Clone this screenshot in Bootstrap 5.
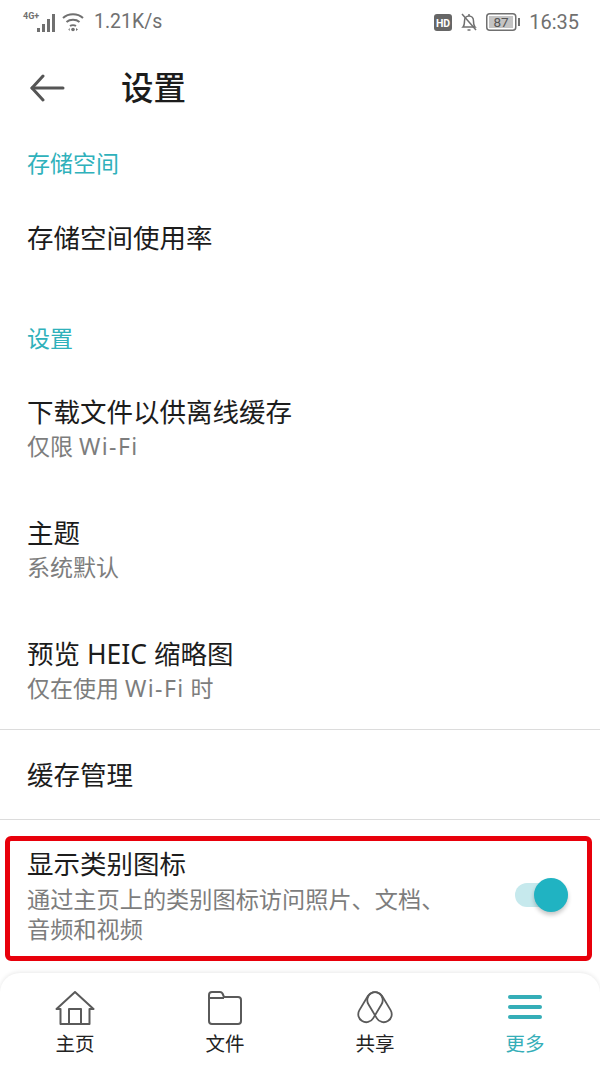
<!DOCTYPE html>
<html lang="zh">
<head>
    <meta charset="UTF-8">
    <meta name="viewport" content="width=device-width, initial-scale=1.0">
    <title>设置</title>
    <link href="https://cdn.jsdelivr.net/npm/bootstrap@5.3.0/dist/css/bootstrap.min.css" rel="stylesheet">

    <style>
        body {
            width: 600px;
            height: 1066px;
            overflow: hidden;
            font-family: "Noto Sans", "Noto Sans CJK SC", sans-serif;
            color: #1c1c1c;
            background: #fff;
        }
        .status-bar { height: 44px; padding: 0 21px 0 22px; color: #707070; font-size: 19.5px; font-family: "Roboto", sans-serif; }
        .status-net { margin-left: 10px; }
        .status-clock { font-size: 20px; margin-left: 8px; }
        .top-bar { height: 88px; padding-left: 30px; }
        .top-title { font-size: 32.5px; line-height: 44px; margin-left: 56px; font-weight: 500; }
        .group-title { font-size: 23px; line-height: 32px; color: #2fb1bb; padding-left: 27px; }
        .set-name { font-size: 26.5px; line-height: 36px; }
        .set-sub { font-size: 23px; line-height: 30px; color: #7d7d7d; }
        .wide-latin { letter-spacing: 1.4px; }
        .set-row { padding-left: 27px; }
        .storage-title { height: 32px; margin-top: 15px; }
        .storage-row { padding-top: 41px; height: 143px; }
        .settings-title { height: 32px; }
        .multi-row { height: 121px; padding-top: 41px; }
        .multi-row .set-name { margin-bottom: 1px; }
        .first-multi { padding-top: 40px; height: 120px; }
        .last-multi { height: 134px; }
        .plain-row { height: 90px; border-top: 1px solid #dcdcdc; }
        .red-box { margin: 16px 8px 0 5px; height: 125px; border: 5px solid #e8000b; border-radius: 6px; padding: 0 19px 7px 17px; }
        .red-box .set-name { margin-bottom: 2px; }
        .red-box .set-sub { font-size: 23.2px; }
        .divider-end { border-top: 1px solid #dcdcdc; }
        .toggle-track { width: 53px; height: 24px; border-radius: 12px; background: #c6e9ed; position: relative; flex: 0 0 auto; }
        .toggle-knob { width: 34px; height: 34px; border-radius: 50%; background: #20b3c2; position: absolute; right: 0; top: -5px; box-shadow: 0 3px 4px rgba(0,0,0,.22); }
        .bottom-bar { margin-top: 12px; height: 93px; border-radius: 20px 20px 0 0; box-shadow: 0 -1px 4px rgba(0,0,0,.09); }
        .tab-item { width: 150px; font-size: 19.5px; line-height: 24px; padding-top: 18px; color: #222; }
        .tab-item svg { display: block; margin-bottom: 7px; }
        .tab-active { color: #35aeb8; }
    </style>
</head>
<body>

    <!-- Barra di stato -->
    <div class="status-bar d-flex align-items-center">
        <svg width="36" height="24" viewBox="0 0 36 24">
            <text x="1" y="9" font-size="9" font-weight="700" font-family="Roboto" fill="#707070">4G+</text>
            <g fill="#707070"><rect x="15" y="18" width="3" height="4"/><rect x="20" y="14" width="3" height="8"/><rect x="25" y="9" width="3" height="13"/><rect x="30" y="4" width="3" height="18"/></g>
        </svg>
        <svg class="ms-1" width="22" height="20" viewBox="0 0 22 20" fill="none" stroke="#707070" stroke-width="2">
            <path d="M1 6c5.500-5 14.500-5 20 0"/><path d="M4.500 10c3.500-3 9.500-3 13 0"/><path d="M8 14c1.500-1 4.500-1 6 0"/><circle cx="11" cy="17.500" r="1.800" fill="#707070" stroke="none"/>
            <path d="M8 16l-2 1.500 2 1.500z" fill="#999" stroke="none"/><path d="M14 16l2 1.500-2 1.500z" fill="#707070" stroke="none"/>
        </svg>
        <span class="status-net">1.21K/s</span>
        <div class="ms-auto d-flex align-items-center">
            <svg width="18" height="17" viewBox="0 0 18 17"><rect width="18" height="17" rx="3" fill="#666"/><text x="9" y="12.500" text-anchor="middle" font-size="10.500" font-weight="700" font-family="Roboto" fill="#fff">HD</text></svg>
            <svg class="ms-2" width="18" height="20" viewBox="0 0 18 20" fill="none" stroke="#707070" stroke-width="1.500">
                <path d="M3 15c1.500-1.500 1.500-3 1.500-6 0-3 2-5 4.500-5s4.500 2 4.500 5c0 3 0 4.500 1.500 6z"/><path d="M7.500 18h3"/><path d="M9 2v2"/><path d="M2 2l14 16"/>
            </svg>
            <svg class="ms-2" width="35" height="18" viewBox="0 0 35 18">
                <rect x=".75" y=".75" width="29" height="16.500" rx="3" fill="none" stroke="#707070" stroke-width="1.500"/>
                <rect x="3" y="3" width="24" height="12" fill="#c4c4c4"/>
                <rect x="32" y="5" width="2" height="8" fill="#707070"/>
                <text x="15" y="14" text-anchor="middle" font-size="13.500" font-family="Roboto" fill="#555">87</text>
            </svg>
            <span class="status-clock">16:35</span>
        </div>
    </div>

    <!-- Titolo -->
    <div class="top-bar d-flex align-items-center">
        <svg width="35" height="28" viewBox="0 0 35 28" fill="none" stroke="#555" stroke-width="3" stroke-linecap="round" stroke-linejoin="round">
            <path d="M33 14H2"/><path d="M13 2L2 14l11 12"/>
        </svg>
        <div class="top-title">设置</div>
    </div>

    <div class="group-title storage-title">存储空间</div>
    <div class="set-row storage-row"><div class="set-name">存储空间使用率</div></div>

    <div class="group-title settings-title">设置</div>
    <div class="set-row multi-row first-multi">
        <div class="set-name">下载文件以供离线缓存</div>
        <div class="set-sub">仅限 <span class="wide-latin">Wi-Fi</span></div>
    </div>
    <div class="set-row multi-row">
        <div class="set-name">主题</div>
        <div class="set-sub">系统默认</div>
    </div>
    <div class="set-row multi-row last-multi">
        <div class="set-name">预览 HEIC 缩略图</div>
        <div class="set-sub">仅在使用 <span class="wide-latin">Wi-Fi</span> 时</div>
    </div>
    <div class="set-row plain-row d-flex align-items-center"><div class="set-name">缓存管理</div></div>
    <div class="divider-end"></div>

    <div class="red-box d-flex align-items-center">
        <div class="flex-grow-1">
            <div class="set-name">显示类别图标</div>
            <div class="set-sub">通过主页上的类别图标访问照片、文档、<br>音频和视频</div>
        </div>
        <div class="toggle-track"><div class="toggle-knob"></div></div>
    </div>

    <!-- Barra inferiore -->
    <div class="bottom-bar d-flex">
        <div class="tab-item d-flex flex-column align-items-center">
            <svg width="40" height="34" viewBox="0 0 40 34" fill="none" stroke="#5a5a5a" stroke-width="2" stroke-linejoin="round">
                <path d="M1.500 18L20 1l18.500 17h-4v15h-29V18z"/><path d="M14 33V18h12v15"/>
            </svg>
            <span>主页</span>
        </div>
        <div class="tab-item d-flex flex-column align-items-center">
            <svg width="34" height="34" viewBox="0 0 34 34" fill="none" stroke="#5a5a5a" stroke-width="2" stroke-linejoin="round">
                <path d="M1 4a3 3 0 0 1 3-3h8a3 3 0 0 1 2.500 1.500L16 6h14a3 3 0 0 1 3 3v21a3 3 0 0 1-3 3H4a3 3 0 0 1-3-3z"/><path d="M1 7h15"/>
            </svg>
            <span>文件</span>
        </div>
        <div class="tab-item d-flex flex-column align-items-center">
            <svg width="36" height="34" viewBox="0 0 36 34" fill="none" stroke="#5a5a5a" stroke-width="1.800">
                <rect x="5.500" y="0" width="16" height="32.400" rx="8" transform="rotate(31 13.500 16.200)"/>
                <rect x="14.500" y="0" width="16" height="32.400" rx="8" transform="rotate(-31 22.500 16.200)"/>
            </svg>
            <span>共享</span>
        </div>
        <div class="tab-item tab-active d-flex flex-column align-items-center">
            <svg width="34" height="34" viewBox="0 0 34 34" fill="#35aeb8">
                <rect y="4" width="34" height="4" rx="2"/><rect y="14" width="34" height="4" rx="2"/><rect y="24" width="34" height="4" rx="2"/>
            </svg>
            <span>更多</span>
        </div>
    </div>

    <script src="https://cdn.jsdelivr.net/npm/bootstrap@5.3.0/dist/js/bootstrap.bundle.min.js"></script>
</body>
</html>
